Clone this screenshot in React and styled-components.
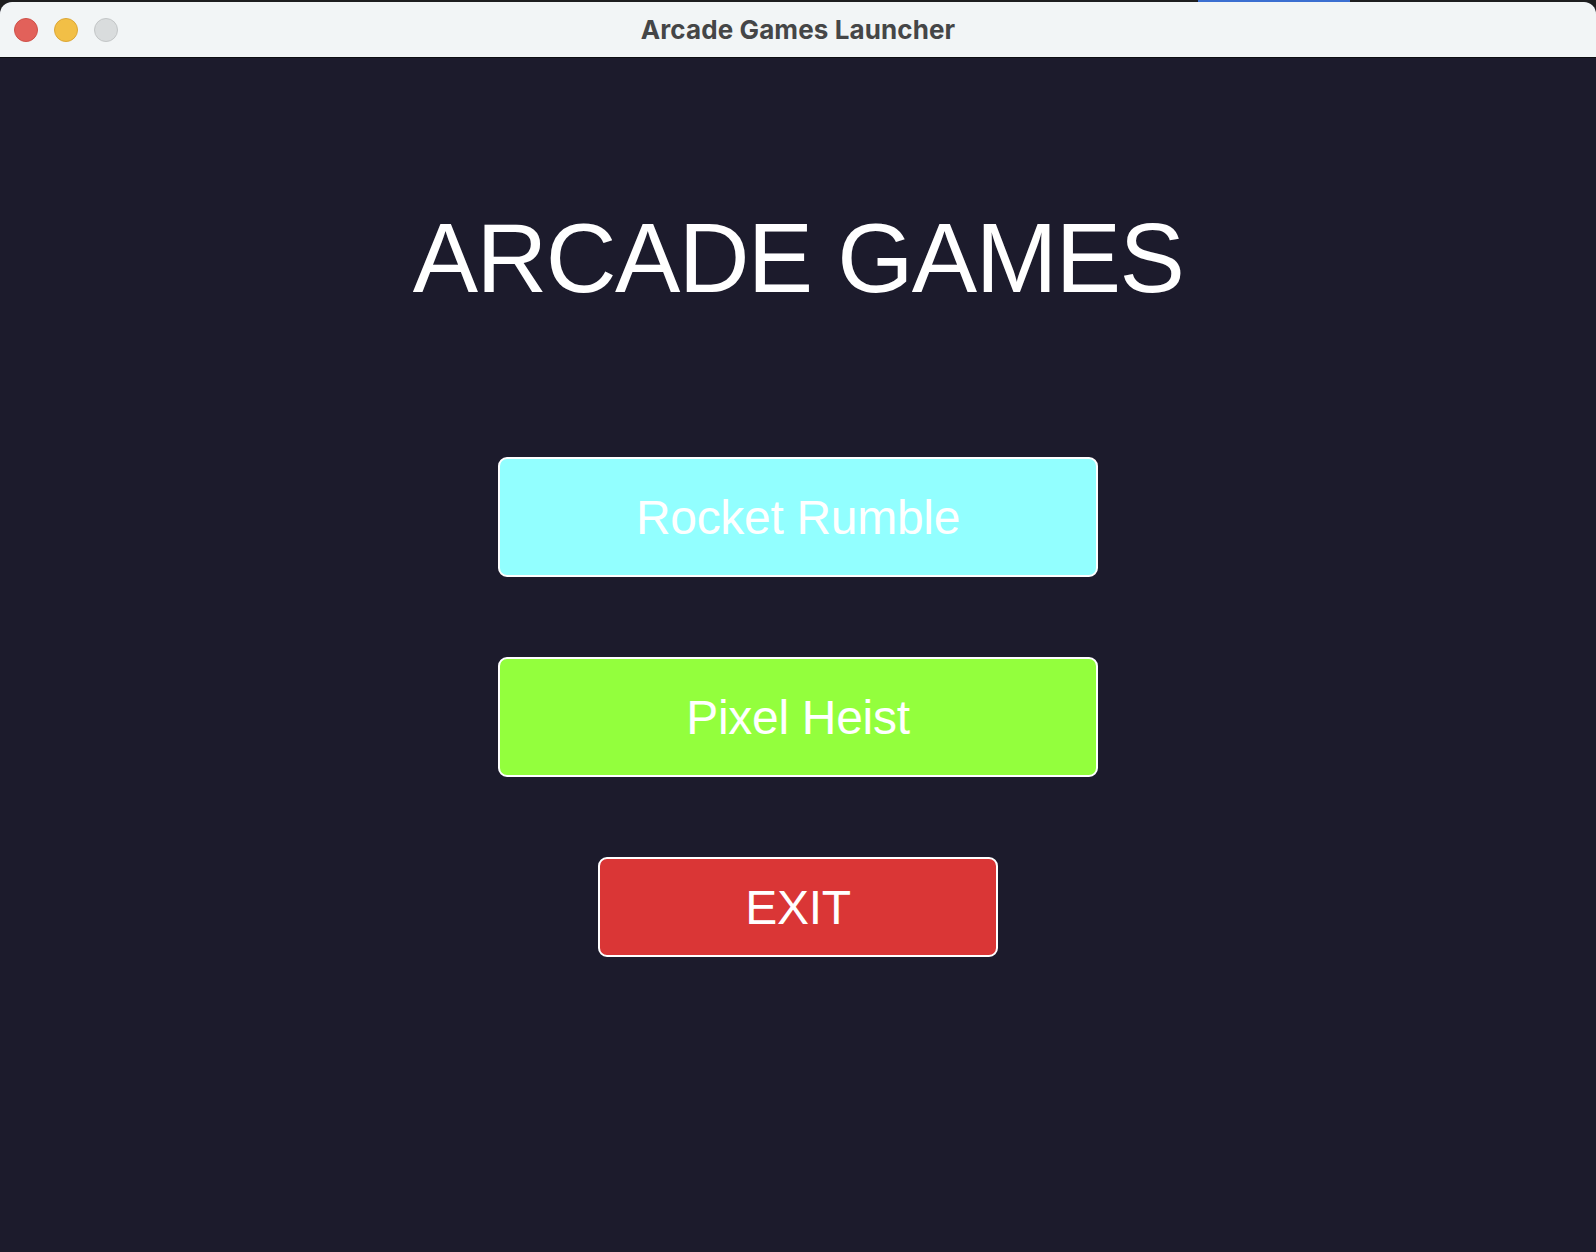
import React from 'react';
import styled, { createGlobalStyle } from 'styled-components';

// Global styles
const GlobalStyle = createGlobalStyle`
  * {
    margin: 0;
    padding: 0;
    box-sizing: border-box;
  }

  html, body, #root {
    height: 100%;
  }

  body {
    background: #1e1e1f;
    font-family: 'Liberation Sans', Arial, sans-serif;
    overflow: hidden;
  }
`;

const Desktop = styled.div`
  position: relative;
  height: 100vh;
  padding-top: 2px;
`;

const FocusStrip = styled.div`
  position: absolute;
  top: 0;
  left: 1198px;
  width: 152px;
  height: 2px;
  background: #3b6fd1;
`;

const Window = styled.div`
  height: 100%;
  display: flex;
  flex-direction: column;
  border-radius: 12px 12px 0 0;
  overflow: hidden;
  background: #1c1b2c;
`;

const TitleBar = styled.header`
  height: 56px;
  flex-shrink: 0;
  display: grid;
  grid-template-columns: 1fr auto 1fr;
  align-items: center;
  background: #f2f5f6;
  border-bottom: 1px solid #0e0e12;
`;

const Lights = styled.div`
  display: flex;
  gap: 16px;
  padding-left: 14px;
  padding-top: 1px;
`;

const Light = styled.span`
  width: 24px;
  height: 24px;
  border-radius: 50%;
  background: ${p => p.$fill};
  border: 1px solid ${p => p.$edge};
`;

const WindowTitle = styled.h1`
  font-family: Inter, Roboto, 'Liberation Sans', sans-serif;
  font-size: 26px;
  font-weight: 700;
  color: #454647;
  letter-spacing: 0.1px;
`;

const Content = styled.main`
  flex: 1;
  display: flex;
  flex-direction: column;
  align-items: center;
  padding-top: 151px;
`;

const Heading = styled.h2`
  font-family: 'Liberation Sans', Arial, sans-serif;
  font-size: 98px;
  font-weight: 400;
  line-height: 98px;
  letter-spacing: -1.6px;
  color: #ffffff;
  margin-bottom: 150px;
`;

const Menu = styled.nav`
  display: flex;
  flex-direction: column;
  align-items: center;
  gap: 80px;
`;

const GameButton = styled.button`
  width: ${p => p.$w}px;
  height: ${p => p.$h}px;
  display: flex;
  align-items: center;
  justify-content: center;
  background: ${p => p.$bg};
  border: 2px solid #ffffff;
  border-radius: 9px;
  color: #ffffff;
  font-family: 'Liberation Sans', Arial, sans-serif;
  font-size: 48px;
  font-weight: 400;
  letter-spacing: -0.3px;
  cursor: pointer;
`;

const games = [
  { name: 'Rocket Rumble', bg: '#92ffff' },
  { name: 'Pixel Heist', bg: '#93ff3d' },
];

export default function App() {
  return (
    <>
      <GlobalStyle />
      <Desktop>
        <FocusStrip />
        <Window>
          <TitleBar>
            <Lights>
              <Light $fill="#e2615a" $edge="#cf5149" />
              <Light $fill="#f2bf46" $edge="#dca737" />
              <Light $fill="#d9dcdd" $edge="#c3c6c7" />
            </Lights>
            <WindowTitle>Arcade Games Launcher</WindowTitle>
            <div />
          </TitleBar>
          <Content>
            <Heading>ARCADE GAMES</Heading>
            <Menu>
              {games.map(g => (
                <GameButton key={g.name} $w={600} $h={120} $bg={g.bg}>
                  {g.name}
                </GameButton>
              ))}
              <GameButton $w={400} $h={100} $bg="#da3636">
                EXIT
              </GameButton>
            </Menu>
          </Content>
        </Window>
      </Desktop>
    </>
  );
}
